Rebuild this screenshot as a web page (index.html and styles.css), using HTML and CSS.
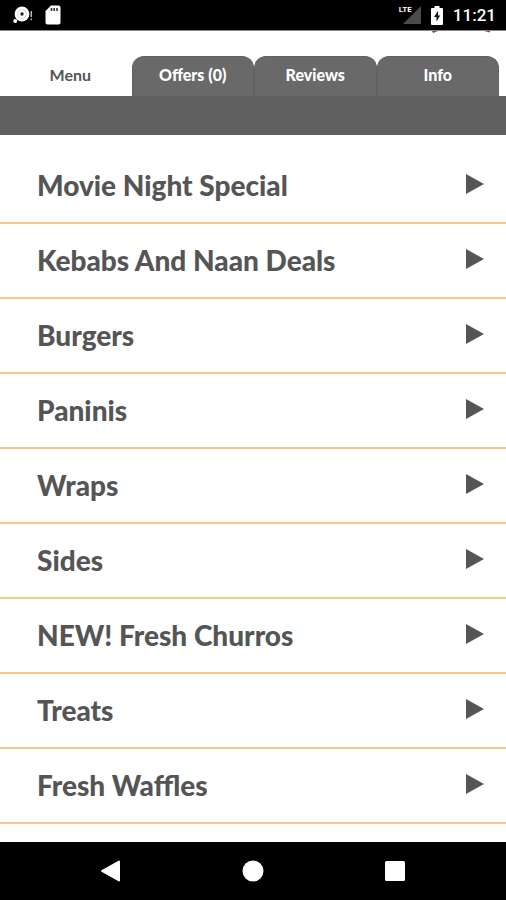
FILE: index.html
```html
<!DOCTYPE html>
<html lang="en">
<head>
<meta charset="utf-8">
<meta name="viewport" content="width=device-width, initial-scale=1">
<title>Menu</title>
<link rel="stylesheet" href="styles.css">
</head>
<body>
<header class="status">
  <div class="status-group">
    <svg class="notice" width="20" height="18" viewBox="0 0 20 18" aria-hidden="true">
      <circle cx="9" cy="8" r="7.4" fill="#fff"/>
      <circle cx="9" cy="8" r="4.4" fill="none" stroke="#ccc" stroke-width=".8"/>
      <circle cx="9" cy="8" r="1.7" fill="#222"/>
      <circle cx="2.2" cy="15" r="2" fill="#fff"/>
      <path d="M18.3 5v6M18.3 12.4v1.8" stroke="#bbb" stroke-width="1.5"/>
    </svg>
    <svg width="16" height="20" viewBox="0 0 16 20" aria-hidden="true">
      <path d="M6 .5h7.500a2 2 0 0 1 2 2v15a2 2 0 0 1-2 2h-11a2 2 0 0 1-2-2V6z" fill="#fff"/>
      <path d="M6.500 3v3M9.200 3v3M12 3v3" stroke="#333" stroke-width="1.600"/>
    </svg>
  </div>
  <div class="status-group status-right">
    <div class="signal">
      <svg width="18" height="18" viewBox="0 0 18 18" aria-hidden="true"><path d="M18 0v18H0z" fill="#4b4b4b"/></svg>
      <span class="lte">LTE</span>
    </div>
    <svg width="12" height="19" viewBox="0 0 12 19" aria-hidden="true">
      <path d="M3.500 0h5v2H11a1 1 0 0 1 1 1v15a1 1 0 0 1-1 1H1a1 1 0 0 1-1-1V3a1 1 0 0 1 1-1h2.500z" fill="#fff"/>
      <path d="M7 5L3 11h2.500v4.500L9.200 9.500H7z" fill="#111"/>
    </svg>
    <span class="clock">11:21</span>
  </div>
</header>
<div class="banner">
  <svg class="logo-edge" width="58" height="2" viewBox="0 0 58 2" aria-hidden="true"><path d="M0 0h6L1 2zM52 0h6v1.500z" fill="#a33d49"/></svg>
</div>
<nav class="tabs">
  <a class="tab current" href="#menu" aria-current="page">Menu</a>
  <a class="tab" href="#offers">Offers (0)</a>
  <a class="tab" href="#reviews">Reviews</a>
  <a class="tab" href="#info">Info</a>
</nav>
<div class="bar"></div>
<main class="content" id="menu">
  <ul class="list">
    <li><a class="row" href="#movie">Movie Night Special<svg class="arrow" viewBox="0 0 18 20" aria-hidden="true"><path d="M0 0l18 10L0 20z"/></svg></a></li>
    <li><a class="row" href="#kebabs">Kebabs And Naan Deals<svg class="arrow" viewBox="0 0 18 20" aria-hidden="true"><path d="M0 0l18 10L0 20z"/></svg></a></li>
    <li><a class="row" href="#burgers">Burgers<svg class="arrow" viewBox="0 0 18 20" aria-hidden="true"><path d="M0 0l18 10L0 20z"/></svg></a></li>
    <li><a class="row" href="#paninis">Paninis<svg class="arrow" viewBox="0 0 18 20" aria-hidden="true"><path d="M0 0l18 10L0 20z"/></svg></a></li>
    <li><a class="row" href="#wraps">Wraps<svg class="arrow" viewBox="0 0 18 20" aria-hidden="true"><path d="M0 0l18 10L0 20z"/></svg></a></li>
    <li><a class="row" href="#sides">Sides<svg class="arrow" viewBox="0 0 18 20" aria-hidden="true"><path d="M0 0l18 10L0 20z"/></svg></a></li>
    <li><a class="row" href="#churros">NEW! Fresh Churros<svg class="arrow" viewBox="0 0 18 20" aria-hidden="true"><path d="M0 0l18 10L0 20z"/></svg></a></li>
    <li><a class="row" href="#treats">Treats<svg class="arrow" viewBox="0 0 18 20" aria-hidden="true"><path d="M0 0l18 10L0 20z"/></svg></a></li>
    <li><a class="row" href="#waffles">Fresh Waffles<svg class="arrow" viewBox="0 0 18 20" aria-hidden="true"><path d="M0 0l18 10L0 20z"/></svg></a></li>
  </ul>
</main>
<footer class="nav">
  <button class="key" type="button" aria-label="Back"><svg width="22" height="22" viewBox="0 0 22 22"><path d="M19 1.500v19L2 11z" fill="#fff" stroke="#fff" stroke-width="2" stroke-linejoin="round"/></svg></button>
  <button class="key" type="button" aria-label="Home"><svg width="22" height="22" viewBox="0 0 22 22"><circle cx="11" cy="11" r="10.500" fill="#fff"/></svg></button>
  <button class="key" type="button" aria-label="Recent apps"><svg width="22" height="22" viewBox="0 0 22 22"><rect x="1" y="1" width="20" height="20" rx="1.500" fill="#fff"/></svg></button>
</footer>
</body>
</html>
```
FILE: styles.css
```css
* {
  box-sizing: border-box;
}

body {
  margin: 0;
  min-height: 100vh;
  display: flex;
  flex-direction: column;
  background: #fff;
  color: #555;
  font-family: Lato, "Open Sans", sans-serif;
}

a {
  color: inherit;
  text-decoration: none;
}

svg {
  display: block;
}

.status {
  display: flex;
  align-items: center;
  justify-content: space-between;
  height: 31px;
  padding: 0 10px 0 13px;
  background: #000;
  border-bottom: 1px solid #888;
}

.status-group {
  display: flex;
  align-items: center;
  gap: 12px;
}

.status-right {
  gap: 10px;
}

.signal {
  position: relative;
  padding-left: 4px;
}

.lte {
  position: absolute;
  left: 0;
  top: -1px;
  padding-right: 1px;
  background: #000;
  color: #fff;
  font: bold 8px/10px Roboto, sans-serif;
}

.clock {
  color: #fff;
  font: 500 17px/24px Roboto, sans-serif;
}

.banner {
  display: flex;
  justify-content: flex-end;
  height: 25px;
  padding-right: 16px;
}

.tabs {
  display: grid;
  grid-template-columns: repeat(4, 1fr);
  padding: 0 7px 0 9px;
}

.tab {
  height: 40px;
  border: 1px solid #626262;
  border-bottom: 0;
  border-radius: 12px 12px 0 0;
  background: #69696a;
  color: #fff;
  font-size: 16px;
  font-weight: 900;
  line-height: 36px;
  text-align: center;
}

.tab.current {
  border-color: transparent;
  background: none;
  color: #555;
  font-weight: bold;
}

.bar {
  height: 39px;
  background: #5f5f5f;
}

.content {
  flex: 1;
  padding: 14px 0 18px;
}

.list {
  margin: 0;
  padding: 0;
  list-style: none;
}

.row {
  display: flex;
  align-items: center;
  justify-content: space-between;
  height: 75px;
  padding: 0 22px 2px 37px;
  border-bottom: 2px solid #f9c78a;
  font-size: 28px;
  font-weight: 900;
  line-height: 32px;
}

.arrow {
  width: 18px;
  height: 20px;
  margin-bottom: 2px;
  fill: #555;
}

.nav {
  display: flex;
  justify-content: center;
  gap: 60px;
  height: 58px;
  background: #000;
}

.key {
  display: grid;
  place-items: center;
  width: 82px;
  padding: 0;
  border: 0;
  background: none;
}
```
